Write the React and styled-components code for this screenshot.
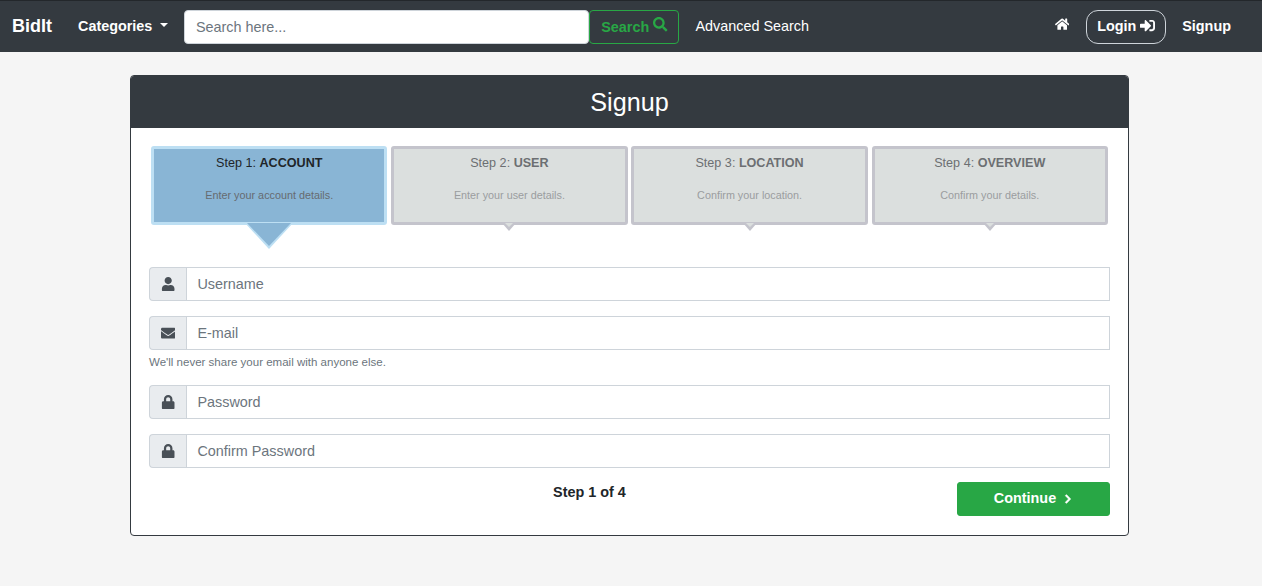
import React from 'react';
import styled, { createGlobalStyle } from 'styled-components';
import { FaHome, FaSignInAlt, FaSearch, FaUser, FaEnvelope, FaLock, FaChevronRight } from 'react-icons/fa';

const GlobalStyle = createGlobalStyle`
  * { box-sizing: border-box; }
  html, body { margin: 0; padding: 0; }
  body {
    background: #f5f5f5;
    font-family: "Liberation Sans", Arial, sans-serif;
    font-size: 14.4px;
    line-height: 1.5;
    color: #212529;
  }
`;

const Page = styled.div`
  height: 586px;
  overflow: hidden;
`;

const Navbar = styled.nav`
  height: 52px;
  background: #343a40;
  border-top: 1px solid #23272b;
  padding: 9px 12px;
  display: flex;
  align-items: center;
  color: #fff;
`;

const Brand = styled.a`
  font-size: 18px;
  font-weight: 700;
  margin-right: 26px;
`;

const Categories = styled.a`
  font-size: 14.4px;
  font-weight: 700;
  display: flex;
  align-items: center;
  margin-right: 16px;
  &::after {
    content: '';
    margin-left: 8px;
    border-top: 4px solid #fff;
    border-left: 4px solid transparent;
    border-right: 4px solid transparent;
    margin-top: -2px;
  }
`;

const SearchInput = styled.input`
  width: 405px;
  height: 34px;
  border: 1px solid #ced4da;
  border-radius: 4px;
  padding: 0 10.5px;
  font: 14.4px "Liberation Sans", Arial, sans-serif;
  color: #495057;
  outline: none;
  &::placeholder { color: #6c757d; opacity: 1; }
`;

const SearchButton = styled.button`
  width: 90px;
  height: 34px;
  border: 1px solid #28a745;
  border-radius: 4px;
  background: transparent;
  color: #28a745;
  font: 700 14.4px "Liberation Sans", Arial, sans-serif;
  padding: 0;
  display: flex;
  align-items: center;
  justify-content: center;
  gap: 4px;
  svg { font-size: 14.4px; margin-top: -4px; }
`;

const NavText = styled.a`
  font-size: 14.4px;
  margin-left: 16px;
`;

const NavRight = styled.div`
  margin-left: auto;
  display: flex;
  align-items: center;
  padding-right: 19px;
`;

const HomeLink = styled.a`
  display: flex;
  font-size: 14.4px;
  margin-right: 17px;
  margin-top: -4px;
`;

const LoginButton = styled.a`
  width: 80px;
  height: 34px;
  border: 1px solid #ced4da;
  border-radius: 12px;
  font-size: 14.4px;
  font-weight: 700;
  display: flex;
  align-items: center;
  justify-content: center;
  gap: 4px;
  margin-right: 16px;
  svg { font-size: 15px; margin-top: -3px; }
`;

const SignupLink = styled.a`
  font-size: 14.4px;
  font-weight: 700;
`;

const Card = styled.section`
  width: 999px;
  height: 461px;
  margin: 23px 0 0 130px;
  background: #fff;
  border: 1px solid #343a40;
  border-radius: 4px;
  overflow: hidden;
`;

const CardHeader = styled.header`
  height: 52px;
  background: #343a40;
  color: #fff;
  font-size: 25.2px;
  padding-top: 1px;
  display: flex;
  align-items: center;
  justify-content: center;
`;

const CardBody = styled.div`
  padding: 18px 18px 0;
`;

const Steps = styled.div`
  display: grid;
  grid-template-columns: repeat(4, 1fr);
  gap: 3.7px;
  padding: 0 2px;
  margin-bottom: 42px;
`;

const Step = styled.div`
  position: relative;
  height: 79px;
  border: 3px solid ${p => (p.$active ? '#bddff3' : '#c4c4cc')};
  border-radius: 3px;
  background: ${p => (p.$active ? '#89b5d5' : '#dbdfde')};
  text-align: center;
  padding-top: 5px;
  color: ${p => (p.$active ? '#212529' : '#6c6f72')};
  &::before {
    content: '';
    position: absolute;
    top: calc(100% + 1px);
    left: 50%;
    transform: translateX(-50%);
    border-top: ${p => (p.$active ? '26px' : '8px')} solid ${p => (p.$active ? '#bddff3' : '#c4c4cc')};
    border-left: ${p => (p.$active ? '24px' : '7px')} solid transparent;
    border-right: ${p => (p.$active ? '24px' : '7px')} solid transparent;
  }
  &::after {
    content: '';
    position: absolute;
    top: calc(100% + 1px);
    left: 50%;
    transform: translateX(-50%);
    border-top: ${p => (p.$active ? '23px' : '4px')} solid ${p => (p.$active ? '#89b5d5' : '#dbdfde')};
    border-left: ${p => (p.$active ? '22px' : '4px')} solid transparent;
    border-right: ${p => (p.$active ? '22px' : '4px')} solid transparent;
  }
`;

const StepTitle = styled.div`
  font-size: 12.6px;
  line-height: 19px;
`;

const StepText = styled.div`
  font-size: 10.8px;
  line-height: 16px;
  margin-top: 14px;
  color: ${p => (p.$active ? '#666b70' : '#9a9d9f')};
`;

const InputGroup = styled.div`
  display: flex;
  height: 34px;
  margin-bottom: ${p => (p.$tight ? '0' : '15px')};
`;

const Addon = styled.span`
  width: 37px;
  flex: none;
  background: #e9ecef;
  border: 1px solid #ced4da;
  border-right: 0;
  border-radius: 4px 0 0 4px;
  color: #495057;
  font-size: 14.4px;
  display: flex;
  align-items: center;
  justify-content: center;
`;

const Field = styled.input`
  flex: 1;
  min-width: 0;
  border: 1px solid #ced4da;
  padding: 0 10.4px;
  font: 14.4px "Liberation Sans", Arial, sans-serif;
  outline: none;
  &::placeholder { color: #6c757d; opacity: 1; }
`;

const Hint = styled.small`
  display: block;
  font-size: 11.52px;
  line-height: 17px;
  color: #6c757d;
  margin: 4px 0 14px;
`;

const Footer = styled.div`
  display: flex;
  align-items: flex-start;
  margin-top: -1px;
`;

const StepCount = styled.div`
  flex: 0 0 735px;
  margin-left: 73px;
  text-align: center;
  font-size: 14.4px;
  font-weight: 700;
  line-height: 21px;
`;

const ContinueButton = styled.button`
  margin-left: auto;
  flex: 0 0 153px;
  height: 34px;
  padding: 0 0 2px;
  background: #28a745;
  border: 1px solid #28a745;
  border-radius: 3px;
  color: #fff;
  font: 700 14.4px "Liberation Sans", Arial, sans-serif;
  display: flex;
  align-items: center;
  justify-content: center;
  gap: 7px;
  svg {
    font-size: 10px;
    margin-top: 1px;
    stroke: currentColor;
    stroke-width: 30;
  }
`;

const steps = [
  { title: 'ACCOUNT', text: 'Enter your account details.' },
  { title: 'USER', text: 'Enter your user details.' },
  { title: 'LOCATION', text: 'Confirm your location.' },
  { title: 'OVERVIEW', text: 'Confirm your details.' },
];

export default function App() {
  return (
    <Page>
      <GlobalStyle />
      <Navbar>
        <Brand>BidIt</Brand>
        <Categories>Categories</Categories>
        <SearchInput placeholder="Search here..." />
        <SearchButton>Search <FaSearch /></SearchButton>
        <NavText>Advanced Search</NavText>
        <NavRight>
          <HomeLink><FaHome /></HomeLink>
          <LoginButton>Login <FaSignInAlt /></LoginButton>
          <SignupLink>Signup</SignupLink>
        </NavRight>
      </Navbar>
      <Card>
        <CardHeader>Signup</CardHeader>
        <CardBody>
          <Steps>
            {steps.map((step, index) => (
              <Step key={step.title} $active={index === 0}>
                <StepTitle>Step {index + 1}: <b>{step.title}</b></StepTitle>
                <StepText $active={index === 0}>{step.text}</StepText>
              </Step>
            ))}
          </Steps>
          <InputGroup>
            <Addon><FaUser /></Addon>
            <Field placeholder="Username" />
          </InputGroup>
          <InputGroup $tight>
            <Addon><FaEnvelope /></Addon>
            <Field placeholder="E-mail" />
          </InputGroup>
          <Hint>We'll never share your email with anyone else.</Hint>
          <InputGroup>
            <Addon><FaLock /></Addon>
            <Field placeholder="Password" />
          </InputGroup>
          <InputGroup>
            <Addon><FaLock /></Addon>
            <Field placeholder="Confirm Password" />
          </InputGroup>
          <Footer>
            <StepCount>Step 1 of 4</StepCount>
            <ContinueButton>Continue <FaChevronRight /></ContinueButton>
          </Footer>
        </CardBody>
      </Card>
    </Page>
  );
}
